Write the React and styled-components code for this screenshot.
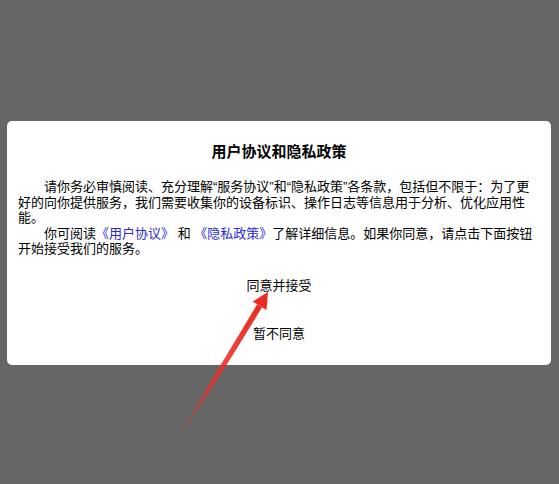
import React from 'react';
import styled, { createGlobalStyle } from 'styled-components';

const GlobalStyle = createGlobalStyle`
  html, body {
    margin: 0;
    padding: 0;
    background: #666666;
  }
  body {
    font-family: "Liberation Sans", "Noto Sans CJK SC", sans-serif;
  }
`;

const Screen = styled.div`
  position: relative;
  width: 559px;
  height: 484px;
  padding-top: 121px;
  box-sizing: border-box;
  background: #666666;
  overflow: hidden;
`;

const Dialog = styled.div`
  margin: 0 8px 0 7px;
  height: 244px;
  box-sizing: border-box;
  padding: 22px 11px 8px;
  background: #ffffff;
  border-radius: 5px;
  display: flex;
  flex-direction: column;
`;

const Title = styled.h2`
  margin: 0 0 18px;
  font-size: 15px;
  line-height: 18px;
  font-weight: bold;
  text-align: center;
  color: #000;
`;

const Paragraph = styled.p`
  margin: 0;
  font-size: 13px;
  line-height: 15.6px;
  text-indent: 2em;
  color: #000;
  text-align: left;
`;

const Link = styled.span`
  color: #2b2bcf;
  cursor: pointer;
`;

const Actions = styled.div`
  margin-top: 4px;
  display: flex;
  flex-direction: column;
`;

const ActionButton = styled.button`
  height: 48px;
  border: none;
  background: transparent;
  font-family: inherit;
  font-size: 13px;
  color: #000;
  padding: 0;
  cursor: pointer;
`;

const ArrowSvg = styled.svg`
  position: absolute;
  left: 0;
  top: 0;
  pointer-events: none;
`;

const Arrow = () => (
  <ArrowSvg width="559" height="484" viewBox="0 0 559 484">
    <defs>
      <linearGradient id="tail" x1="177" y1="440" x2="262" y2="306" gradientUnits="userSpaceOnUse">
        <stop offset="0" stopColor="#e8302a" stopOpacity="0" />
        <stop offset="0.45" stopColor="#e8302a" stopOpacity="0.85" />
        <stop offset="1" stopColor="#ee2a22" />
      </linearGradient>
    </defs>
    <path d="M262 307.2 Q222 374 177.4 440.3 L176.6 439.7 Q216 372 257.2 304.2 Z" fill="url(#tail)" />
    <polygon points="268,292 266.5,310 252.8,301.5" fill="#ee2a22" />
  </ArrowSvg>
);

export default function App() {
  return (
    <Screen>
      <GlobalStyle />
      <Dialog>
        <Title>用户协议和隐私政策</Title>
        <Paragraph>
          请你务必审慎阅读、充分理解“服务协议”和“隐私政策”各条款，包括但不限于：为了更好的向你提供服务，我们需要收集你的设备标识、操作日志等信息用于分析、优化应用性能。
        </Paragraph>
        <Paragraph>
          你可阅读<Link>《用户协议》</Link> 和 <Link>《隐私政策》</Link>了解详细信息。如果你同意，请点击下面按钮开始接受我们的服务。
        </Paragraph>
        <Actions>
          <ActionButton>同意并接受</ActionButton>
          <ActionButton>暂不同意</ActionButton>
        </Actions>
      </Dialog>
      <Arrow />
    </Screen>
  );
}
